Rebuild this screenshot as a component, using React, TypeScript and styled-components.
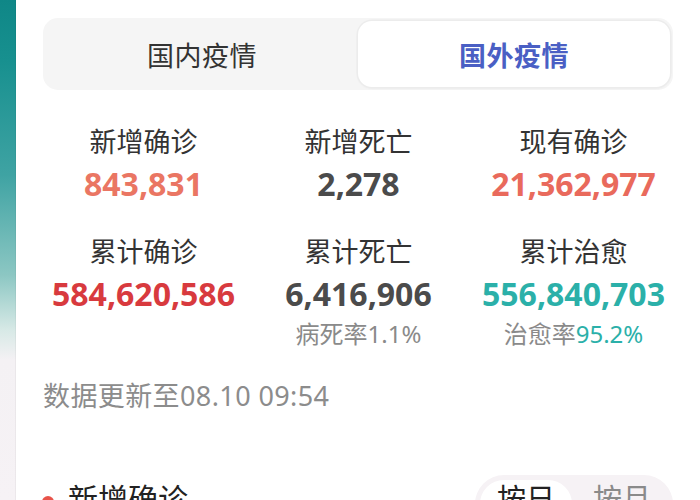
import React, { useState } from 'react';
import styled, { createGlobalStyle } from 'styled-components';

const GlobalStyle = createGlobalStyle`
    html, body {
        margin: 0;
        padding: 0;
        background: #fff;
        font-family: "Noto Sans", "Noto Sans CJK SC", sans-serif;
        color: #333;
    }
`;

const Page = styled.div`
    display: flex;
    width: 700px;
    height: 500px;
    overflow: hidden;
    background: #fff;
`;

const SideStrip = styled.div`
    flex: 0 0 15px;
    background: linear-gradient(
        to bottom,
        #0f8787 0%,
        #17908f 12%,
        #3fa3a3 35%,
        #8cc7c3 55%,
        #d7e9e6 66%,
        #f4f1f4 72%,
        #f6f2f5 100%
    );
    border-right: 1px solid rgba(0, 0, 0, 0.04);
`;

const Main = styled.div`
    flex: 1;
    display: flex;
    flex-direction: column;
    padding: 18px 27px 0 27px;

    & > * {
        flex-shrink: 0;
    }
`;

const TabBar = styled.div`
    display: grid;
    grid-template-columns: 1fr 1fr;
    height: 72px;
    padding: 3px;
    box-sizing: border-box;
    background: #f5f5f5;
    border-radius: 15px;
`;

const Tab = styled.div<{ $active?: boolean }>`
    display: flex;
    align-items: center;
    justify-content: center;
    border-radius: 14px;
    font-size: 27px;
    letter-spacing: 0.5px;
    color: ${p => (p.$active ? '#4a5fc4' : '#333')};
    font-weight: ${p => (p.$active ? 600 : 400)};
    background: ${p => (p.$active ? '#fff' : 'transparent')};
    box-shadow: ${p => (p.$active ? '0 0 0 1.5px #ececec, 0 1px 3px rgba(0,0,0,0.06)' : 'none')};
`;

const StatGrid = styled.div`
    display: grid;
    grid-template-columns: repeat(3, 1fr);
    row-gap: 29px;
    margin: 34px -8px 0 -7px;
`;

const StatCell = styled.div`
    display: flex;
    flex-direction: column;
    align-items: center;
`;

const StatLabel = styled.div`
    font-size: 27px;
    line-height: 36px;
    color: #333;
`;

const StatValue = styled.div<{ $color: string }>`
    margin-top: 3px;
    font-size: 32px;
    line-height: 42px;
    font-weight: 700;
    color: ${p => p.$color};
`;

const StatSub = styled.div`
    margin-top: 4px;
    font-size: 24px;
    line-height: 30px;
    color: #8a8a8a;
`;

const Rate = styled.span<{ $color: string }>`
    color: ${p => p.$color};
`;

const UpdateTime = styled.div`
    margin-top: 29px;
    font-size: 27px;
    line-height: 36px;
    letter-spacing: 0.4px;
    color: #8c8c8c;
`;

const ChartHeader = styled.div`
    display: flex;
    justify-content: space-between;
    align-items: flex-start;
    margin-top: 61px;
`;

const ChartTitle = styled.div`
    display: flex;
    align-items: flex-start;
    gap: 14px;
    font-size: 30px;
    line-height: 40px;
    color: #222;
    margin-top: 4px;
`;

const Dot = styled.span`
    width: 12px;
    height: 12px;
    border-radius: 50%;
    background: #e8534a;
    margin-left: -1px;
    margin-top: 17px;
`;

const Segmented = styled.div`
    display: flex;
    padding: 5px;
    gap: 4px;
    background: #f6f2f5;
    border-radius: 30px;
    width: 198px;
    box-sizing: border-box;
`;

const Segment = styled.div<{ $active?: boolean }>`
    flex: 1;
    height: 48px;
    display: flex;
    align-items: flex-start;
    justify-content: center;
    border-radius: 24px;
    font-size: 29px;
    line-height: 38px;
    background: ${p => (p.$active ? '#fff' : 'transparent')};
    color: ${p => (p.$active ? '#222' : '#8a8a8a')};
`;

type Stat = {
    label: string;
    value: string;
    color: string;
    sub?: { text: string; rate: string; color: string };
};

const stats: Stat[] = [
    { label: '新增确诊', value: '843,831', color: '#ea7663' },
    { label: '新增死亡', value: '2,278', color: '#4b4b4b' },
    { label: '现有确诊', value: '21,362,977', color: '#e96a5c' },
    { label: '累计确诊', value: '584,620,586', color: '#d83a3e' },
    {
        label: '累计死亡',
        value: '6,416,906',
        color: '#4b4b4b',
        sub: { text: '病死率', rate: '1.1%', color: '#8a8a8a' },
    },
    {
        label: '累计治愈',
        value: '556,840,703',
        color: '#2bb0a9',
        sub: { text: '治愈率', rate: '95.2%', color: '#2bb0a9' },
    },
];

const App: React.FC = () => {
    const [region, setRegion] = useState<'domestic' | 'foreign'>('foreign');
    const [range, setRange] = useState<'day' | 'month'>('day');

    return (
        <>
            <GlobalStyle />
            <Page>
                <SideStrip />
                <Main>
                    <TabBar>
                        <Tab $active={region === 'domestic'} onClick={() => setRegion('domestic')}>国内疫情</Tab>
                        <Tab $active={region === 'foreign'} onClick={() => setRegion('foreign')}>国外疫情</Tab>
                    </TabBar>

                    <StatGrid>
                        {stats.map(s => (
                            <StatCell key={s.label}>
                                <StatLabel>{s.label}</StatLabel>
                                <StatValue $color={s.color}>{s.value}</StatValue>
                                {s.sub && (
                                    <StatSub>
                                        {s.sub.text}
                                        <Rate $color={s.sub.color}>{s.sub.rate}</Rate>
                                    </StatSub>
                                )}
                            </StatCell>
                        ))}
                    </StatGrid>

                    <UpdateTime>数据更新至08.10 09:54</UpdateTime>

                    <ChartHeader>
                        <ChartTitle>
                            <Dot />
                            新增确诊
                        </ChartTitle>
                        <Segmented>
                            <Segment $active={range === 'day'} onClick={() => setRange('day')}>按日</Segment>
                            <Segment $active={range === 'month'} onClick={() => setRange('month')}>按月</Segment>
                        </Segmented>
                    </ChartHeader>
                </Main>
            </Page>
        </>
    );
};

export default App;
